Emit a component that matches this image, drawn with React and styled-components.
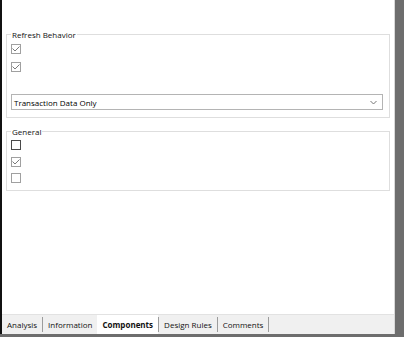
import React from "react";
import styled, { createGlobalStyle } from "styled-components";

const GlobalStyle = createGlobalStyle`
  html, body {
    margin: 0;
    padding: 0;
    background: #6d6d6d;
  }
  body {
    font-family: "Open Sans", "Noto Sans", "Liberation Sans", sans-serif;
  }
`;

const Frame = styled.div`
  width: 404px;
  height: 337px;
  background: #6d6d6d;
  display: flex;
  align-items: flex-start;
`;

const Panel = styled.div`
  width: 395px;
  height: 334px;
  border-left: 2px solid #111;
  border-right: 1px solid #d8d8d8;
  box-sizing: border-box;
  display: flex;
  flex-direction: column;
  background: #fff;
`;

const Content = styled.div`
  flex: 1;
  padding: 29px 4px 0 4px;
  display: flex;
  flex-direction: column;
  gap: 8px;
`;

const Group = styled.fieldset`
  margin: 0;
  border: 1px solid #dedede;
  padding: ${(p) => p.$top}px 6px ${(p) => p.$bottom}px 4px;
  min-width: 0;
  display: flex;
  flex-direction: column;
`;

const Legend = styled.legend`
  font-size: 8px;
  line-height: 11px;
  color: #111;
  padding: 0 1px;
  margin-left: 0;
`;

const Row = styled.div`
  height: ${(p) => p.$h}px;
  display: flex;
  align-items: flex-start;
`;

const Box = styled.span`
  width: 10px;
  height: 10px;
  box-sizing: border-box;
  border: 1px solid ${(p) => (p.$dim ? "#a0a0a0" : "#4a4a4a")};
  background: #fff;
  display: inline-flex;
  align-items: center;
  justify-content: center;
`;

const Select = styled.div`
  margin-top: ${(p) => p.$top}px;
  height: 16px;
  box-sizing: border-box;
  border: 1px solid #b4b4b4;
  display: flex;
  align-items: center;
  justify-content: space-between;
  padding: 0 5px 0 2px;
  font-size: 8px;
  color: #000;
`;

const TabStrip = styled.div`
  height: 19px;
  border-top: 1px solid #e2e2e2;
  background: #f0f0f0;
  display: flex;
  align-items: stretch;
`;

const Tab = styled.div`
  display: flex;
  align-items: center;
  padding: 0 5px;
  font-size: 8px;
  color: #111;
  font-weight: ${(p) => (p.$active ? 700 : 400)};
  background: ${(p) => (p.$active ? "#fff" : "transparent")};
`;

const Sep = styled.span`
  width: 1px;
  align-self: center;
  height: 15px;
  background: #9c9c9c;
`;

const Checkbox = ({ checked, dim }) => (
  <Box $dim={dim}>
    {checked && (
      <svg width="8" height="8" viewBox="0 0 8 8">
        <polyline
          points="0.5,3.5 3,6 7.5,1.5"
          fill="none"
          stroke="#7a7a7a"
          strokeWidth="1"
        />
      </svg>
    )}
  </Box>
);

const Chevron = () => (
  <svg width="7" height="5" viewBox="0 0 7 5">
    <polyline points="0.5,1 3.5,4 6.5,1" fill="none" stroke="#777" strokeWidth="1" />
  </svg>
);

const tabs = ["Analysis", "Information", "Components", "Design Rules", "Comments"];
const active = "Components";

export default function App() {
  return (
    <>
      <GlobalStyle />
      <Frame>
        <Panel>
          <Content>
            <Group $top={4} $bottom={7}>
              <Legend>Refresh Behavior</Legend>
              <Row $h={18}>
                <Checkbox checked dim />
              </Row>
              <Row $h={18}>
                <Checkbox checked dim />
              </Row>
              <Select $top={14}>
                <span>Transaction Data Only</span>
                <Chevron />
              </Select>
            </Group>
            <Group $top={3} $bottom={0}>
              <Legend>General</Legend>
              <Row $h={17}>
                <Checkbox />
              </Row>
              <Row $h={16}>
                <Checkbox checked dim />
              </Row>
              <Row $h={17}>
                <Checkbox dim />
              </Row>
            </Group>
          </Content>
          <TabStrip>
            {tabs.map((t) => (
              <React.Fragment key={t}>
                <Tab $active={t === active}>{t}</Tab>
                {tabs.indexOf(t) !== tabs.indexOf(active) - 1 && <Sep />}
              </React.Fragment>
            ))}
          </TabStrip>
        </Panel>
      </Frame>
    </>
  );
}
